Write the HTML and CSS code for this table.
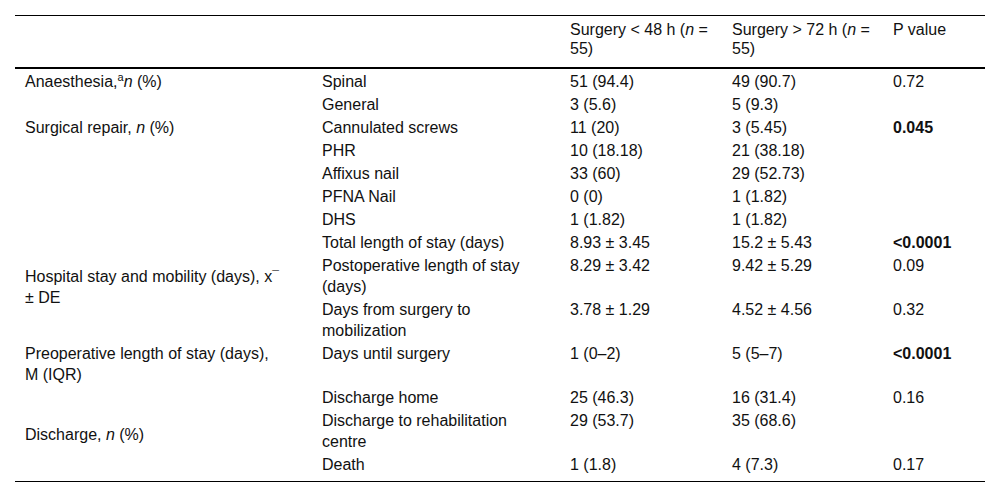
FILE: index.html
```html
<!DOCTYPE html>
<html lang="en">
<head>
<meta charset="utf-8">
<title>Table</title>
<link rel="stylesheet" href="styles.css">
</head>
<body>
<table class="data">
  <colgroup>
    <col class="c1"><col class="c2"><col class="c3"><col class="c4"><col class="c5">
  </colgroup>
  <thead>
    <tr>
      <th class="lead"></th>
      <th class="sub"></th>
      <th>Surgery &lt; 48 h (<i>n</i> = 55)</th>
      <th>Surgery &gt; 72 h (<i>n</i> = 55)</th>
      <th class="pv">P value</th>
    </tr>
  </thead>
  <tbody>
    <tr><td class="lead">Anaesthesia,<sup>a</sup><i>n</i> (%)</td><td class="sub">Spinal</td><td>51 (94.4)</td><td>49 (90.7)</td><td class="pv">0.72</td></tr>
    <tr><td class="lead"></td><td class="sub">General</td><td>3 (5.6)</td><td>5 (9.3)</td><td class="pv"></td></tr>
    <tr><td class="lead">Surgical repair, <i>n</i> (%)</td><td class="sub">Cannulated screws</td><td>11 (20)</td><td>3 (5.45)</td><td class="pv"><b>0.045</b></td></tr>
    <tr><td class="lead"></td><td class="sub">PHR</td><td>10 (18.18)</td><td>21 (38.18)</td><td class="pv"></td></tr>
    <tr><td class="lead"></td><td class="sub">Affixus nail</td><td>33 (60)</td><td>29 (52.73)</td><td class="pv"></td></tr>
    <tr><td class="lead"></td><td class="sub">PFNA Nail</td><td>0 (0)</td><td>1 (1.82)</td><td class="pv"></td></tr>
    <tr><td class="lead"></td><td class="sub">DHS</td><td>1 (1.82)</td><td>1 (1.82)</td><td class="pv"></td></tr>
    <tr><td class="lead mid" rowspan="3">Hospital stay and mobility (days), x<span class="bar">¯</span> ± DE</td><td class="sub">Total length of stay (days)</td><td>8.93 ± 3.45</td><td>15.2 ± 5.43</td><td class="pv"><b>&lt;0.0001</b></td></tr>
    <tr><td class="sub">Postoperative length of stay (days)</td><td>8.29 ± 3.42</td><td>9.42 ± 5.29</td><td class="pv">0.09</td></tr>
    <tr><td class="sub">Days from surgery to mobilization</td><td>3.78 ± 1.29</td><td>4.52 ± 4.56</td><td class="pv">0.32</td></tr>
    <tr><td class="lead">Preoperative length of stay (days),<br>M (IQR)</td><td class="sub">Days until surgery</td><td>1 (0–2)</td><td>5 (5–7)</td><td class="pv"><b>&lt;0.0001</b></td></tr>
    <tr><td class="lead mid" rowspan="3">Discharge, <i>n</i> (%)</td><td class="sub">Discharge home</td><td>25 (46.3)</td><td>16 (31.4)</td><td class="pv">0.16</td></tr>
    <tr><td class="sub">Discharge to rehabilitation centre</td><td>29 (53.7)</td><td>35 (68.6)</td><td class="pv"></td></tr>
    <tr class="last"><td class="sub">Death</td><td>1 (1.8)</td><td>4 (7.3)</td><td class="pv">0.17</td></tr>
  </tbody>
</table>
</body>
</html>
```
FILE: styles.css
```css
html, body {
  margin: 0;
  padding: 0;
  background: #ffffff;
}
body {
  padding: 15px 15px 0 15px;
  font-family: "Liberation Sans", Arial, sans-serif;
  font-size: 16px;
  line-height: 21px;
  color: #111111;
}
.data {
  width: 970px;
  border-collapse: collapse;
  table-layout: fixed;
  border-top: 1px solid #000;
  border-bottom: 1px solid #000;
}
.c1 { width: 307px; }
.c2 { width: 248px; }
.c3 { width: 162px; }
.c4 { width: 161px; }
.c5 { width: 92px; }

.data th,
.data td {
  text-align: left;
  vertical-align: top;
  font-weight: normal;
  padding: 2px 15px 0 0;
}
.data th {
  line-height: 19px;
  padding-top: 4px;
  padding-bottom: 9px;
}
.data thead tr {
  border-bottom: 2px solid #000;
}
.data .lead {
  padding-left: 10px;
  padding-right: 31px;
}
.data .sub {
  padding-right: 33px;
}
.data .pv {
  padding-right: 0;
}
.data .mid {
  vertical-align: middle;
}
.data b {
  font-weight: bold;
}
.data sup {
  font-size: 11px;
  line-height: 0;
  vertical-align: 6px;
}
.data .bar {
  font-size: 12px;
  line-height: 0;
  vertical-align: 2px;
}
.data tr.last td {
  padding-bottom: 6px;
}
```
